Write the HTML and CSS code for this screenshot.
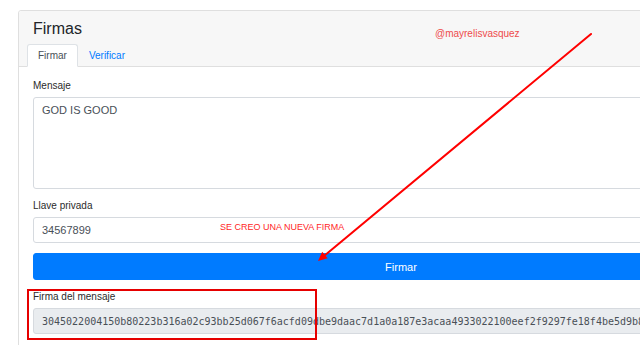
FILE: index.html
```html
<!DOCTYPE html>
<html lang="es">
<head>
<meta charset="utf-8">
<title>Firmas</title>
<link rel="stylesheet" href="styles.css">
</head>
<body>
<div class="page">
  <div class="card">
    <div class="card-header">
      <h1 class="title">Firmas</h1>
      <ul class="tabs">
        <li class="tab active">Firmar</li>
        <li class="tab">Verificar</li>
      </ul>
    </div>
    <div class="card-body">
      <div class="group">
        <label class="label">Mensaje</label>
        <textarea class="control area">GOD IS GOOD</textarea>
      </div>
      <div class="group">
        <label class="label">Llave privada</label>
        <input class="control field" type="text" value="34567899">
      </div>
      <button class="btn" type="button">Firmar</button>
      <div class="group">
        <label class="label">Firma del mensaje</label>
        <input class="control field mono" type="text" readonly value="3045022004150b80223b316a02c93bb25d067f6acfd09dbe9daac7d1a0a187e3acaa4933022100eef2f9297fe18f4be5d9b8c3a1f0">
      </div>
    </div>
  </div>

  <div class="note note-user">@mayrelisvasquez</div>
  <div class="note note-firma">SE CREO UNA NUEVA FIRMA</div>
  <div class="highlight"></div>
  <svg class="arrow" width="640" height="345" viewBox="0 0 640 345">
    <line x1="591" y1="34" x2="324" y2="256" stroke="#f00" stroke-width="2" stroke-linecap="round"/>
    <polygon points="318,261 327.6,258.3 322.2,251.8" fill="#f00"/>
  </svg>
</div>
</body>
</html>
```

FILE: styles.css
```css
html, body {
  margin: 0;
  padding: 0;
  overflow: hidden;
  background: #ffffff;
}

body {
  font-family: "Liberation Sans", Arial, sans-serif;
  color: #212529;
}

.page {
  position: relative;
  width: 800px;
  height: 345px;
  padding: 10px 0 0 18px;
  box-sizing: border-box;
}

.card {
  width: 764px;
  border: 1px solid #dfdfdf;
  border-radius: 3px;
  background: #ffffff;
}

.card-header {
  background: #f7f7f7;
  border-bottom: 1px solid #dfdfdf;
  padding: 8px 14px 0;
  border-radius: 3px 3px 0 0;
}

.title {
  margin: 0;
  font-size: 16px;
  line-height: 19px;
  font-weight: normal;
  color: #212529;
}

.tabs {
  display: flex;
  list-style: none;
  margin: 6px 0 -1px -6px;
  padding: 0;
}

.tab {
  font-size: 10px;
  line-height: 11px;
  padding: 5px 10px;
  border: 1px solid transparent;
  border-radius: 3px 3px 0 0;
  color: #007bff;
}

.tab.active {
  background: #ffffff;
  border-color: #dee2e6 #dee2e6 #ffffff;
  color: #495057;
}

.card-body {
  padding: 12px 14px 20px;
}

.group {
  margin-bottom: 10px;
}

.label {
  display: block;
  font-size: 10px;
  line-height: 14px;
  margin-bottom: 4px;
  color: #2b2b2b;
}

.control {
  display: block;
  width: 100%;
  box-sizing: border-box;
  margin: 0;
  border: 1px solid #d6dadf;
  border-radius: 3px;
  background: #ffffff;
  font-family: "Liberation Sans", Arial, sans-serif;
  font-size: 11px;
  color: #495057;
  outline: none;
}

.area {
  height: 92px;
  padding: 4px 8px;
  line-height: 16px;
  resize: none;
}

.field {
  height: 26px;
  padding: 0 8px;
}

.mono {
  font-family: "DejaVu Sans Mono", "Liberation Mono", monospace;
  font-size: 10px;
  letter-spacing: 0;
  background: #e9ecef;
  color: #495057;
}

.btn {
  display: block;
  width: 100%;
  height: 27px;
  margin: 1px 0 10px;
  border: 1px solid #007bff;
  border-radius: 3px;
  background: #007bff;
  color: #ffffff;
  font-family: "Liberation Sans", Arial, sans-serif;
  font-size: 11px;
  padding: 0;
}

.note {
  position: absolute;
  white-space: nowrap;
}

.note-user {
  left: 435px;
  top: 28px;
  font-size: 10px;
  line-height: 12px;
  color: #ee4b4b;
}

.note-firma {
  left: 220px;
  top: 222px;
  font-size: 9px;
  line-height: 11px;
  color: #ff1f1f;
}

.highlight {
  position: absolute;
  left: 27px;
  top: 289px;
  width: 290px;
  height: 51px;
  box-sizing: border-box;
  border: 2px solid #e60000;
}

.arrow {
  position: absolute;
  left: 0;
  top: 0;
  pointer-events: none;
}
```
